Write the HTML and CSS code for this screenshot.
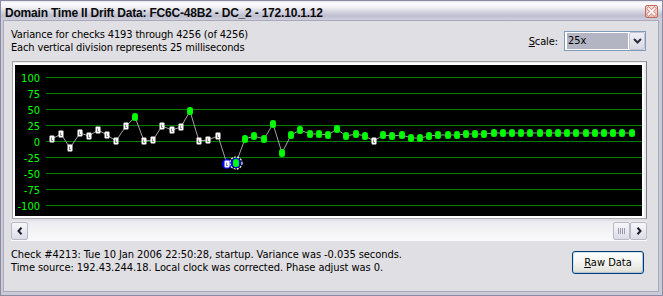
FILE: index.html
```html
<!DOCTYPE html>
<html>
<head>
<meta charset="utf-8">
<title>Domain Time II Drift Data</title>
<link rel="stylesheet" href="styles.css">
</head>
<body>
<div class="window">
  <div class="titlebar">
    <span class="title">Domain Time II Drift Data: FC6C-48B2 - DC_2 - 172.10.1.12</span>
    <span class="close">
      <svg width="13" height="13" viewBox="0 0 13 13">
        <defs>
          <linearGradient id="cg" x1="0" y1="0" x2="0" y2="1">
            <stop offset="0" stop-color="#f6e4e0"/>
            <stop offset="1" stop-color="#e3bdb4"/>
          </linearGradient>
        </defs>
        <rect x="0.5" y="0.5" width="12" height="12" rx="1.5" fill="url(#cg)" stroke="#c0695a"/>
        <path d="M3.5 3.5 L9.5 9.5 M9.5 3.5 L3.5 9.5" stroke="#d48a7c" stroke-width="3.4" stroke-linecap="square"/>
        <path d="M3.5 3.5 L9.5 9.5 M9.5 3.5 L3.5 9.5" stroke="#ffffff" stroke-width="1.8" stroke-linecap="square"/>
      </svg>
    </span>
  </div>
  <div class="client">
    <div class="header">
      <div class="info">
        <div>Variance for checks 4193 through 4256 (of 4256)</div>
        <div>Each vertical division represents 25 milliseconds</div>
      </div>
      <div class="scale">
        <span class="scale-label"><u>S</u>cale:</span>
        <div class="combo">
          <span class="combo-value">25x</span>
          <span class="combo-btn">
            <svg width="9" height="6" viewBox="0 0 9 6"><path d="M1 1 L4.5 4.5 L8 1" fill="none" stroke="#2b2b3b" stroke-width="2"/></svg>
          </span>
        </div>
      </div>
    </div>

    <div class="chart-frame">
      <div class="plot">
        <svg class="chart" width="627" height="151" viewBox="16 66 627 151">
          <defs>
            <g id="mw">
              <rect x="-2.5" y="-3.5" width="5" height="7" rx="1" fill="#ffffff"/>
              <rect x="-1" y="-1.5" width="1" height="3" fill="#8a8a8a"/>
              <rect x="-1" y="1" width="2" height="1" fill="#8a8a8a"/>
            </g>
            <g id="mg">
              <rect x="-3" y="-4" width="6" height="8" rx="2.5" fill="#00ee00"/>
              <rect x="-2" y="-3" width="4" height="6" rx="1.5" fill="#00ff00"/>
            </g>
          </defs>
          <rect x="16" y="66" width="627" height="151" fill="#000000"/>
          <path d="M47 78.5H643M47 94.5H643M47 110.5H643M47 126.5H643M47 142.5H643M47 158.5H643M47 174.5H643M47 190.5H643M47 206.5H643" stroke="#008000" stroke-width="1"/>
          <g class="ylabels">
            <text x="41" y="83">100</text>
            <text x="41" y="99">75</text>
            <text x="41" y="115">50</text>
            <text x="41" y="131">25</text>
            <text x="41" y="147">0</text>
            <text x="41" y="163">-25</text>
            <text x="41" y="179">-50</text>
            <text x="41" y="195">-75</text>
            <text x="41" y="211">-100</text>
          </g>
          <polyline fill="none" stroke="#a4a4a4" stroke-width="1" points="53,140 62,135 71,149 81,134 90,137 99,131 108,136 117,142 127,127 136,118 145,142 154,141 163,127 173,131 182,128 191,112 200,142 209,141 219,137 228,165 237,164 246,140 255,137 265,140 274,125 283,154 292,136 301,131 311,135 320,135 329,136 338,130 347,137 357,135 366,137 375,142 384,136 393,137 403,136 412,139 421,139 430,137 439,136 449,136 458,136 467,135 476,135 485,135 495,134 504,134 513,134 522,134 531,134 541,134 550,134 559,134 568,134 577,134 587,134 596,134 605,134 614,134 623,134 633,134"/>
          <circle cx="228" cy="165" r="5" fill="#0000ff"/>
          <circle cx="237" cy="164" r="5" fill="#0000ff"/>
          <circle cx="237" cy="164" r="6" fill="none" stroke="#ffffff" stroke-width="1.2" stroke-dasharray="2 1.2"/>
          <use href="#mw" x="53" y="140"/>
          <use href="#mw" x="62" y="135"/>
          <use href="#mw" x="71" y="149"/>
          <use href="#mw" x="81" y="134"/>
          <use href="#mw" x="90" y="137"/>
          <use href="#mw" x="99" y="131"/>
          <use href="#mw" x="108" y="136"/>
          <use href="#mw" x="117" y="142"/>
          <use href="#mw" x="127" y="127"/>
          <use href="#mg" x="136" y="118"/>
          <use href="#mw" x="145" y="142"/>
          <use href="#mw" x="154" y="141"/>
          <use href="#mw" x="163" y="127"/>
          <use href="#mw" x="173" y="131"/>
          <use href="#mw" x="182" y="128"/>
          <use href="#mg" x="191" y="112"/>
          <use href="#mw" x="200" y="142"/>
          <use href="#mw" x="209" y="141"/>
          <use href="#mw" x="219" y="137"/>
          <use href="#mw" x="228" y="165"/>
          <use href="#mg" x="237" y="164"/>
          <use href="#mg" x="246" y="140"/>
          <use href="#mg" x="255" y="137"/>
          <use href="#mg" x="265" y="140"/>
          <use href="#mg" x="274" y="125"/>
          <use href="#mg" x="283" y="154"/>
          <use href="#mg" x="292" y="136"/>
          <use href="#mg" x="301" y="131"/>
          <use href="#mg" x="311" y="135"/>
          <use href="#mg" x="320" y="135"/>
          <use href="#mg" x="329" y="136"/>
          <use href="#mg" x="338" y="130"/>
          <use href="#mg" x="347" y="137"/>
          <use href="#mg" x="357" y="135"/>
          <use href="#mg" x="366" y="137"/>
          <use href="#mw" x="375" y="142"/>
          <use href="#mg" x="384" y="136"/>
          <use href="#mg" x="393" y="137"/>
          <use href="#mg" x="403" y="136"/>
          <use href="#mg" x="412" y="139"/>
          <use href="#mg" x="421" y="139"/>
          <use href="#mg" x="430" y="137"/>
          <use href="#mg" x="439" y="136"/>
          <use href="#mg" x="449" y="136"/>
          <use href="#mg" x="458" y="136"/>
          <use href="#mg" x="467" y="135"/>
          <use href="#mg" x="476" y="135"/>
          <use href="#mg" x="485" y="135"/>
          <use href="#mg" x="495" y="134"/>
          <use href="#mg" x="504" y="134"/>
          <use href="#mg" x="513" y="134"/>
          <use href="#mg" x="522" y="134"/>
          <use href="#mg" x="531" y="134"/>
          <use href="#mg" x="541" y="134"/>
          <use href="#mg" x="550" y="134"/>
          <use href="#mg" x="559" y="134"/>
          <use href="#mg" x="568" y="134"/>
          <use href="#mg" x="577" y="134"/>
          <use href="#mg" x="587" y="134"/>
          <use href="#mg" x="596" y="134"/>
          <use href="#mg" x="605" y="134"/>
          <use href="#mg" x="614" y="134"/>
          <use href="#mg" x="623" y="134"/>
          <use href="#mg" x="633" y="134"/>
        </svg>
      </div>
    </div>

    <div class="scrollbar">
      <span class="sb-btn">
        <svg width="6" height="8" viewBox="0 0 6 8"><path d="M4.5 0.8 L1.5 4 L4.5 7.2" fill="none" stroke="#1e1e2e" stroke-width="2"/></svg>
      </span>
      <span class="sb-track"></span>
      <span class="sb-thumb">
        <svg width="7" height="6" viewBox="0 0 7 6"><path d="M0.5 0V6M2.5 0V6M4.5 0V6M6.5 0V6" stroke="#9a9aac" stroke-width="1"/></svg>
      </span>
      <span class="sb-btn">
        <svg width="6" height="8" viewBox="0 0 6 8"><path d="M1.5 0.8 L4.5 4 L1.5 7.2" fill="none" stroke="#1e1e2e" stroke-width="2"/></svg>
      </span>
    </div>

    <div class="footer">
      <div class="status">
        <div>Check #4213: Tue 10 Jan 2006 22:50:28, startup. Variance was -0.035 seconds.</div>
        <div>Time source: 192.43.244.18. Local clock was corrected. Phase adjust was 0.</div>
      </div>
      <button class="raw-btn" type="button"><u>R</u>aw Data</button>
    </div>
  </div>
</div>
</body>
</html>
```

FILE: styles.css
```css
* {
  box-sizing: border-box;
}

html,
body {
  margin: 0;
  padding: 0;
}

body {
  width: 663px;
  height: 296px;
  overflow: hidden;
  background: #ffffff;
  font-family: "DejaVu Sans Condensed", "DejaVu Sans", sans-serif;
  font-size: 11px;
  color: #000000;
}

.window {
  width: 663px;
  height: 296px;
  display: flex;
  flex-direction: column;
  background: #cbcbd8;
  border: 1px solid #8a8aa2;
}

.titlebar {
  height: 19px;
  flex: none;
  display: flex;
  justify-content: space-between;
  align-items: flex-start;
  background: linear-gradient(#e6e6ee 0, #fbfbfd 12%, #f2f2f6 32%, #d6d6e2 55%, #bfbfd0 78%, #cfcfdc 100%);
}

.title {
  padding: 5px 0 0 4px;
  line-height: 14px;
  font-family: "Liberation Sans", Arial, sans-serif;
  font-weight: bold;
  font-size: 12px;
  letter-spacing: -0.2px;
  color: #0a0a0a;
  white-space: nowrap;
}

.close {
  display: block;
  width: 13px;
  height: 13px;
  margin: 4px 4px 0 0;
}

.close svg {
  display: block;
}

.client {
  flex: 1;
  margin: 0 3px 3px 2px;
  border: 1px solid #a8a8ba;
  background: #e0dfe3;
  display: flex;
  flex-direction: column;
}

.header {
  margin-top: 7px;
  padding: 0 12px 0 7px;
  display: flex;
  justify-content: space-between;
  align-items: flex-start;
  line-height: 13px;
}

.info {
  letter-spacing: -0.15px;
  white-space: nowrap;
}

.scale {
  margin-top: 3px;
  display: flex;
  align-items: center;
  gap: 6px;
}

.scale-label {
  letter-spacing: -0.1px;
}

.combo {
  width: 82px;
  height: 20px;
  border: 1px solid #7f9db9;
  background: #ffffff;
  display: flex;
  align-items: center;
  padding: 0 0 0 2px;
  gap: 1px;
}

.combo-value {
  flex: 1;
  height: 16px;
  line-height: 16px;
  padding-left: 1px;
  background: #b4b5c3;
  color: #000000;
}

.combo-btn {
  width: 16px;
  height: 18px;
  border: 1px solid #c3c3d3;
  border-radius: 2px;
  background: linear-gradient(#f0f0f6, #d9d9e5);
  display: flex;
  align-items: center;
  justify-content: center;
}

.combo-btn svg {
  display: block;
}

.chart-frame {
  margin: 7px 0 0 8px;
  width: 635px;
  height: 158px;
  border: 1px solid;
  border-color: #a0a0a0 #7d7d85 #a8a8b0 #a0a0a0;
  background: #ececef;
  padding: 1px 2px 0 0;
}

.plot {
  width: 631px;
  height: 155px;
  border: 2px solid #ffffff;
}

.chart {
  display: block;
}

.ylabels text {
  fill: #00ff00;
  font-family: "DejaVu Sans Condensed", "DejaVu Sans", sans-serif;
  font-size: 11px;
  text-anchor: end;
}

.scrollbar {
  margin: 2px 0 0 7px;
  width: 636px;
  height: 20px;
  display: flex;
  align-items: center;
  background: linear-gradient(#ececf0, #fafafc);
}

.sb-btn,
.sb-thumb {
  width: 17px;
  height: 18px;
  flex: none;
  border: 1px solid #b9b9c9;
  border-radius: 2px;
  background: linear-gradient(#f7f7fa, #dcdce6);
  display: flex;
  align-items: center;
  justify-content: center;
}

.sb-btn svg,
.sb-thumb svg {
  display: block;
}

.sb-track {
  flex: 1;
}

.footer {
  margin-top: 7px;
  padding: 0 14px 0 7px;
  display: flex;
  justify-content: space-between;
  align-items: flex-start;
  line-height: 13px;
}

.status {
  letter-spacing: -0.06px;
  white-space: nowrap;
}

.raw-btn {
  width: 72px;
  height: 23px;
  margin-top: 3px;
  padding: 0;
  border: 1px solid #003c74;
  border-radius: 3px;
  background: linear-gradient(#ffffff 0, #f5f5f2 45%, #e6e6e0 85%, #d8d8d0 100%);
  box-shadow: inset 1px 1px 0 #cde4f7, inset -1px -1px 0 #b0c4dc;
  font-family: "DejaVu Sans Condensed", "DejaVu Sans", sans-serif;
  font-size: 11px;
  color: #000000;
  text-align: center;
}
```
